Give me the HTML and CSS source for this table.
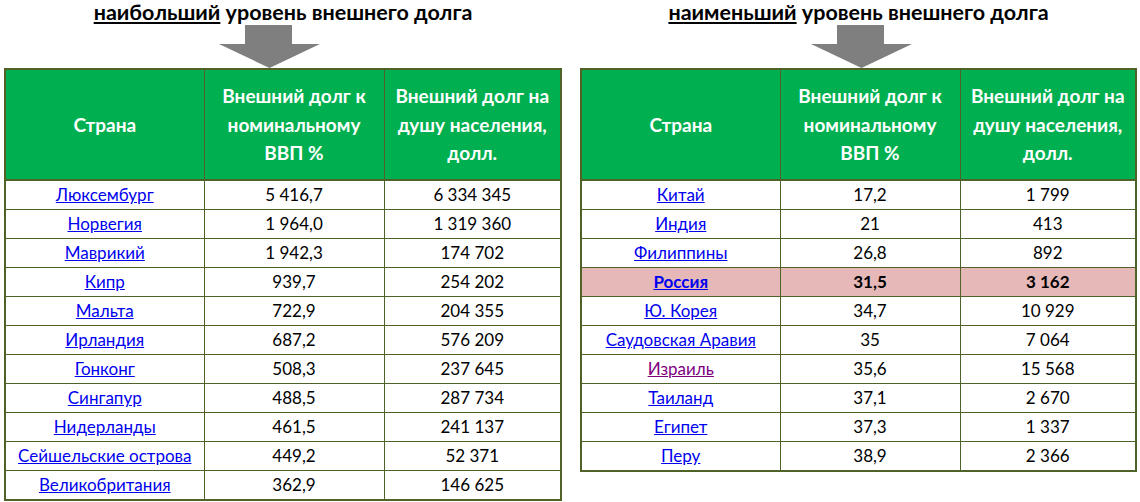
FILE: index.html
```html
<!DOCTYPE html>
<html lang="ru">
<head>
<meta charset="utf-8">
<link rel="stylesheet" href="styles.css">
</head>
<body>
<div class="page">
  <section class="panel panel-left">
    <h2 class="title"><u>наибольший</u> уровень внешнего долга</h2>
    <svg class="arrow" width="101" height="43" viewBox="0 0 101 43"><polygon points="26,0 73,0 73,19 101,19 50.5,43 0,19 26,19" fill="#7f7f7f"/></svg>
    <table class="debt">
      <colgroup><col class="c1"><col class="c2"><col class="c3"></colgroup>
      <thead>
        <tr><th>Страна</th><th>Внешний долг к номинальному ВВП %</th><th>Внешний долг на душу населения, долл.</th></tr>
      </thead>
      <tbody>
        <tr><td><a href="#">Люксембург</a></td><td>5 416,7</td><td>6 334 345</td></tr>
        <tr><td><a href="#">Норвегия</a></td><td>1 964,0</td><td>1 319 360</td></tr>
        <tr><td><a href="#">Маврикий</a></td><td>1 942,3</td><td>174 702</td></tr>
        <tr><td><a href="#">Кипр</a></td><td>939,7</td><td>254 202</td></tr>
        <tr><td><a href="#">Мальта</a></td><td>722,9</td><td>204 355</td></tr>
        <tr><td><a href="#">Ирландия</a></td><td>687,2</td><td>576 209</td></tr>
        <tr><td><a href="#">Гонконг</a></td><td>508,3</td><td>237 645</td></tr>
        <tr><td><a href="#">Сингапур</a></td><td>488,5</td><td>287 734</td></tr>
        <tr><td><a href="#">Нидерланды</a></td><td>461,5</td><td>241 137</td></tr>
        <tr><td><a href="#">Сейшельские острова</a></td><td>449,2</td><td>52 371</td></tr>
        <tr><td><a href="#">Великобритания</a></td><td>362,9</td><td>146 625</td></tr>
      </tbody>
    </table>
  </section>
  <section class="panel panel-right">
    <h2 class="title"><u>наименьший</u> уровень внешнего долга</h2>
    <svg class="arrow" width="101" height="43" viewBox="0 0 101 43"><polygon points="26,0 73,0 73,19 101,19 50.5,43 0,19 26,19" fill="#7f7f7f"/></svg>
    <table class="debt">
      <colgroup><col class="c1"><col class="c2"><col class="c3"></colgroup>
      <thead>
        <tr><th>Страна</th><th>Внешний долг к номинальному ВВП %</th><th>Внешний долг на душу населения, долл.</th></tr>
      </thead>
      <tbody>
        <tr><td><a href="#">Китай</a></td><td>17,2</td><td>1 799</td></tr>
        <tr><td><a href="#">Индия</a></td><td>21</td><td>413</td></tr>
        <tr><td><a href="#">Филиппины</a></td><td>26,8</td><td>892</td></tr>
        <tr class="hl"><td><a href="#">Россия</a></td><td>31,5</td><td>3 162</td></tr>
        <tr><td><a href="#">Ю. Корея</a></td><td>34,7</td><td>10 929</td></tr>
        <tr><td><a href="#">Саудовская Аравия</a></td><td>35</td><td>7 064</td></tr>
        <tr><td><a href="#" class="visited">Израиль</a></td><td>35,6</td><td>15 568</td></tr>
        <tr><td><a href="#">Таиланд</a></td><td>37,1</td><td>2 670</td></tr>
        <tr><td><a href="#">Египет</a></td><td>37,3</td><td>1 337</td></tr>
        <tr><td><a href="#">Перу</a></td><td>38,9</td><td>2 366</td></tr>
      </tbody>
    </table>
  </section>
</div>
</body>
</html>
```

FILE: styles.css
```css
html, body {
  margin: 0;
  padding: 0;
  background: #ffffff;
}
body {
  font-family: Lato, "Open Sans", "Liberation Sans", sans-serif;
  color: #000;
}
.page {
  display: flex;
  gap: 18px;
  padding-left: 4px;
}
.panel {
  width: 558px;
  display: flex;
  flex-direction: column;
}
.panel-right {
  width: 557px;
}
.title {
  margin: 0;
  height: 25px;
  line-height: 24px;
  font-size: 21.5px;
  font-weight: 700;
  text-align: center;
  color: #000;
}
.arrow {
  display: block;
}
.panel-left .arrow {
  margin-left: 215px;
}
.panel-right .arrow {
  margin-left: 231px;
}
.debt {
  border-collapse: collapse;
  width: 100%;
  table-layout: fixed;
  border: 2px solid #4f6228;
}
.c1 { width: 199px; }
.c2 { width: 180px; }
.debt th {
  background: #00b050;
  color: #fff;
  font-size: 19px;
  font-weight: 700;
  line-height: 28.5px;
  height: 108px;
  padding: 1px 4px 0;
  border: 1px solid #4f6228;
  border-bottom: 2px solid #4f6228;
  text-align: center;
  vertical-align: middle;
}
.debt td {
  height: 28px;
  padding: 0;
  border: 1px solid #4f6228;
  text-align: center;
  vertical-align: middle;
  font-size: 17px;
  line-height: 20px;
}
.debt a {
  color: #0000ee;
  text-decoration: underline;
}
.debt a.visited {
  color: #800080;
}
.debt tr.hl td {
  background: #e6b8b7;
  font-weight: 700;
}
```
